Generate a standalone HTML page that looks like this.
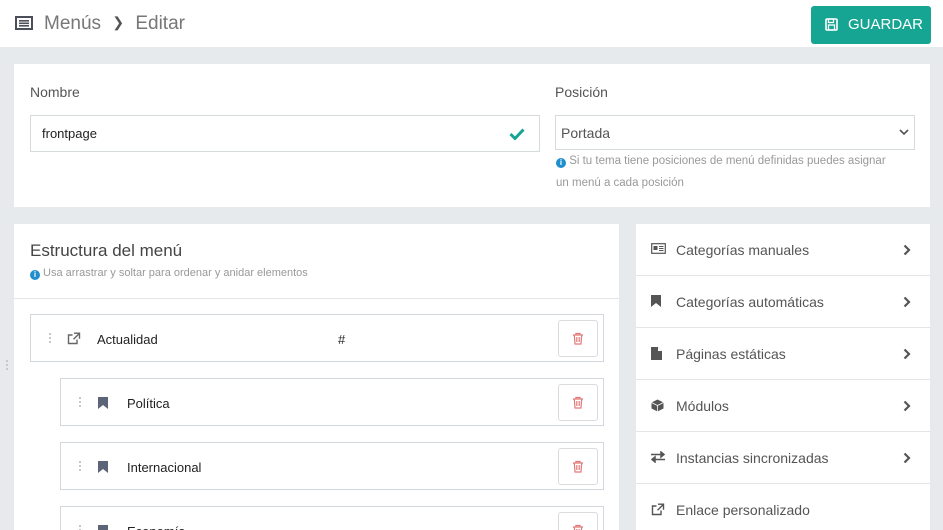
<!DOCTYPE html>
<html><head><meta charset="utf-8"><style>
*{box-sizing:border-box;margin:0;padding:0}
html{width:943px;height:530px;overflow:hidden}
body{width:943px;height:530px;overflow:hidden;background:#e7eaed;font-family:"Liberation Sans",sans-serif;position:relative;color:#333}
.abs{position:absolute}
.hdr{left:0;top:0;width:943px;height:47px;background:#fff}
.card{background:#fff}
.lbl{font-size:14px;color:#555}
.inp{border:1px solid #d5dadd;background:#fff}
.item{border:1px solid #d2d8dc;background:#fff;height:48px}
.trash{position:absolute;right:5px;top:5px;width:40px;height:37px;border:1px solid #d8dcdf;border-radius:3px}
.dots{position:absolute;width:2px;height:12px;background:repeating-linear-gradient(#c8c8c8 0 2px,transparent 2px 4px)}
.row{position:absolute;left:636px;width:294px;height:52px;border-bottom:1px solid #e3e6e8;font-size:14px;color:#555}
.row span{position:absolute;left:40px;top:18px}
.row svg{position:absolute;left:15px;top:19px}
.row .chev{left:267px;top:20px}
</style></head><body>
<div class="abs hdr">
 <svg class="abs" style="left:15px;top:16px" width="18" height="14" viewBox="0 0 18 14"><rect x="1" y="1" width="16" height="12" fill="none" stroke="#4a4f5a" stroke-width="2"/><rect x="4" y="4" width="10" height="1.6" fill="#4a4f5a"/><rect x="4" y="6.5" width="10" height="1.6" fill="#4a4f5a"/><rect x="4" y="9" width="10" height="1.6" fill="#4a4f5a"/></svg>
 <div class="abs" style="left:44px;top:13px;font-size:19px;color:#777">Menús <span style="font-size:14px;color:#555;margin:0 6px;position:relative;top:-2px">&#x276F;</span> Editar</div>
 <div class="abs" style="left:811px;top:6px;width:120px;height:38px;background:#17a593;border-radius:3px;color:#fff;font-size:15px">
  <svg class="abs" style="left:14px;top:12px" width="13" height="13" viewBox="0 0 13 13"><rect x="1" y="1" width="11" height="11" rx="1" fill="none" stroke="#fff" stroke-width="1.6"/><rect x="3.5" y="1" width="5" height="3.5" fill="none" stroke="#fff" stroke-width="1.3"/><rect x="3.5" y="7" width="6" height="5" fill="none" stroke="#fff" stroke-width="1.3"/></svg>
  <span class="abs" style="left:37px;top:10px">GUARDAR</span></div>
</div>
<div class="abs card" style="left:14px;top:64px;width:916px;height:143px"></div>
<div class="abs lbl" style="left:30px;top:84px">Nombre</div>
<div class="abs inp" style="left:30px;top:115px;width:510px;height:37px"><span class="abs" style="left:11px;top:10px;font-size:13px;color:#222">frontpage</span>
 <svg class="abs" style="left:478px;top:11px" width="16" height="13" viewBox="0 0 16 13"><path d="M1.5 7l4.5 4.5 8.5-9" fill="none" stroke="#17a593" stroke-width="3"/></svg></div>
<div class="abs lbl" style="left:555px;top:84px">Posición</div>
<div class="abs inp" style="left:555px;top:115px;width:360px;height:35px"><span class="abs" style="left:5px;top:9px;font-size:14px;color:#555">Portada</span>
 <svg class="abs" style="left:343px;top:13px" width="10" height="7" viewBox="0 0 10 7"><path d="M1 1l4 4 4-4" fill="none" stroke="#555" stroke-width="1.6"/></svg></div>
<div class="abs" style="left:556px;top:150px;font-size:11.5px;color:#999;line-height:22px;width:370px"><span style="display:inline-block;width:10px;height:10px;border-radius:50%;background:#1f8ecd;color:#fff;font-size:8px;text-align:center;line-height:10px;font-weight:bold;vertical-align:-1px">i</span> Si tu tema tiene posiciones de menú definidas puedes asignar<br>un menú a cada posición</div>

<div class="abs card" style="left:14px;top:224px;width:605px;height:306px"></div>
<div class="abs" style="left:14px;top:298px;width:605px;height:1px;background:#e3e6e8"></div>
<div class="abs" style="left:30px;top:241px;font-size:17px;color:#444">Estructura del menú</div>
<div class="abs" style="left:30px;top:267px;font-size:11px;color:#999"><span style="display:inline-block;width:10px;height:10px;border-radius:50%;background:#1f8ecd;color:#fff;font-size:8px;text-align:center;line-height:10px;font-weight:bold;vertical-align:-1px">i</span> Usa arrastrar y soltar para ordenar y anidar elementos</div>
<div class="dots" style="left:6px;top:360px"></div>

<div class="abs item" style="left:30px;top:314px;width:574px">
 <div class="dots" style="left:18px;top:18px"></div>
 <svg class="abs" style="left:36px;top:17px" width="14" height="13" viewBox="0 0 14 13"><path d="M10 7.5v4H1.5V3h4" fill="none" stroke="#666" stroke-width="1.4"/><path d="M7 1.2h5.5v5.5M12.3 1.5L6.5 7.3" fill="none" stroke="#666" stroke-width="1.4"/></svg>
 <span class="abs" style="left:66px;top:17px;font-size:13px;color:#222">Actualidad</span>
 <span class="abs" style="left:307px;top:17px;font-size:13px;color:#222">#</span>
 <div class="trash"><svg class="abs" style="left:13px;top:11px" width="12" height="13" viewBox="0 0 12 13"><path d="M1 3h10M4 3V1.5h4V3M2.3 3l.7 9h6l.7-9M4.8 5v5M7.2 5v5" fill="none" stroke="#e07b7b" stroke-width="1.2"/></svg></div>
</div>
<div class="abs item" style="left:60px;top:378px;width:544px">
 <div class="dots" style="left:18px;top:18px"></div>
 <svg class="abs" style="left:37px;top:18px" width="10" height="12" viewBox="0 0 10 12"><path d="M0 0h10v12L5 8 0 12z" fill="#5c6477"/></svg>
 <span class="abs" style="left:66px;top:17px;font-size:13px;color:#222">Política</span>
 <div class="trash"><svg class="abs" style="left:13px;top:11px" width="12" height="13" viewBox="0 0 12 13"><path d="M1 3h10M4 3V1.5h4V3M2.3 3l.7 9h6l.7-9M4.8 5v5M7.2 5v5" fill="none" stroke="#e07b7b" stroke-width="1.2"/></svg></div>
</div>
<div class="abs item" style="left:60px;top:442px;width:544px">
 <div class="dots" style="left:18px;top:18px"></div>
 <svg class="abs" style="left:37px;top:18px" width="10" height="12" viewBox="0 0 10 12"><path d="M0 0h10v12L5 8 0 12z" fill="#5c6477"/></svg>
 <span class="abs" style="left:66px;top:17px;font-size:13px;color:#222">Internacional</span>
 <div class="trash"><svg class="abs" style="left:13px;top:11px" width="12" height="13" viewBox="0 0 12 13"><path d="M1 3h10M4 3V1.5h4V3M2.3 3l.7 9h6l.7-9M4.8 5v5M7.2 5v5" fill="none" stroke="#e07b7b" stroke-width="1.2"/></svg></div>
</div>
<div class="abs item" style="left:60px;top:506px;width:544px">
 <div class="dots" style="left:18px;top:18px"></div>
 <svg class="abs" style="left:37px;top:18px" width="10" height="12" viewBox="0 0 10 12"><path d="M0 0h10v12L5 8 0 12z" fill="#5c6477"/></svg>
 <span class="abs" style="left:66px;top:17px;font-size:13px;color:#222">Economía</span>
 <div class="trash"><svg class="abs" style="left:13px;top:11px" width="12" height="13" viewBox="0 0 12 13"><path d="M1 3h10M4 3V1.5h4V3M2.3 3l.7 9h6l.7-9M4.8 5v5M7.2 5v5" fill="none" stroke="#e07b7b" stroke-width="1.2"/></svg></div>
</div>

<div class="abs card" style="left:636px;top:224px;width:294px;height:306px"></div>
<div class="row" style="top:224px"><svg width="15" height="11" viewBox="0 0 15 11"><rect x=".7" y=".7" width="13.6" height="9.6" fill="none" stroke="#555" stroke-width="1.2"/><rect x="2.5" y="3" width="4" height="4" fill="#555"/><path d="M8 3.5h4.5M8 5.5h4.5M8 7.5h4.5" stroke="#555"/></svg><span>Categorías manuales</span><svg class="chev" width="8" height="12" viewBox="0 0 8 12"><path d="M1.5 1.5L6 6l-4.5 4.5" fill="none" stroke="#555" stroke-width="2.2"/></svg></div>
<div class="row" style="top:276px"><svg width="10" height="12" viewBox="0 0 10 12"><path d="M0 0h10v12L5 8 0 12z" fill="#555"/></svg><span>Categorías automáticas</span><svg class="chev" width="8" height="12" viewBox="0 0 8 12"><path d="M1.5 1.5L6 6l-4.5 4.5" fill="none" stroke="#555" stroke-width="2.2"/></svg></div>
<div class="row" style="top:328px"><svg width="11" height="13" viewBox="0 0 11 13"><path d="M0 0h7l4 4v9H0z" fill="#555"/><path d="M7 0v4h4" fill="#fff"/></svg><span>Páginas estáticas</span><svg class="chev" width="8" height="12" viewBox="0 0 8 12"><path d="M1.5 1.5L6 6l-4.5 4.5" fill="none" stroke="#555" stroke-width="2.2"/></svg></div>
<div class="row" style="top:380px"><svg width="13" height="13" viewBox="0 0 13 13"><path d="M6.5 0.5l6 3v6l-6 3-6-3v-6z" fill="#555"/><path d="M.5 3.5l6 3 6-3M6.5 6.5v6" fill="none" stroke="#fff" stroke-width=".8"/></svg><span>Módulos</span><svg class="chev" width="8" height="12" viewBox="0 0 8 12"><path d="M1.5 1.5L6 6l-4.5 4.5" fill="none" stroke="#555" stroke-width="2.2"/></svg></div>
<div class="row" style="top:432px"><svg width="14" height="12" viewBox="0 0 14 12"><path d="M0 3.5h13M13 3.5L10 1v5z" fill="#555" stroke="#555" stroke-width="1.5"/><path d="M14 8.5H1M1 8.5L4 6v5z" fill="#555" stroke="#555" stroke-width="1.5"/></svg><span>Instancias sincronizadas</span><svg class="chev" width="8" height="12" viewBox="0 0 8 12"><path d="M1.5 1.5L6 6l-4.5 4.5" fill="none" stroke="#555" stroke-width="2.2"/></svg></div>
<div class="row" style="top:484px;border:none"><svg width="14" height="13" viewBox="0 0 14 13"><path d="M10 7.5v4H1.5V3h4" fill="none" stroke="#555" stroke-width="1.4"/><path d="M7 1.2h5.5v5.5M12.3 1.5L6.5 7.3" fill="none" stroke="#555" stroke-width="1.4"/></svg><span>Enlace personalizado</span></div>
</body></html>
